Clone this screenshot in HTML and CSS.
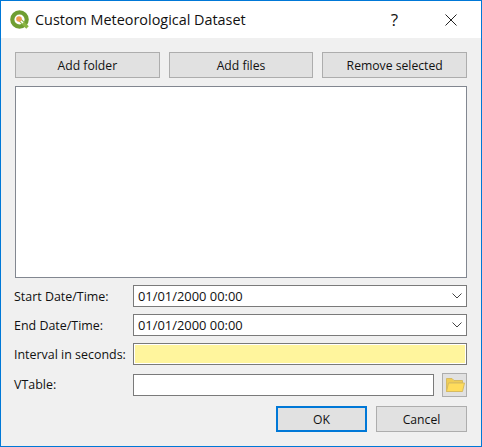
FILE: index.html
```html
<!DOCTYPE html>
<html lang="en">
<head>
  <meta charset="UTF-8" />
  <title>Custom Meteorological Dataset</title>
  <link rel="stylesheet" href="styles.css">
</head>
<body>

<div class="dialog">
  <div class="titlebar">
    <svg class="app-icon" width="20" height="20" viewBox="0 0 20 20">
      <circle cx="9.500" cy="9.500" r="7.200" fill="#fff" stroke="#6f9e32" stroke-width="4.200"/>
      <path d="M10 10 L17.500 17.500" stroke="#8ab543" stroke-width="3.600"/>
      <path d="M10 10 L13 13" stroke="#fff" stroke-width="1.500"/>
      <circle cx="9" cy="9" r="2.800" fill="#ee9a4d"/>
    </svg>
    <span class="title">Custom Meteorological Dataset</span>
    <span class="help">?</span>
    <svg class="close" width="12" height="12" viewBox="0 0 12 12">
      <path d="M0.500 0.500 L11.500 11.500 M11.500 0.500 L0.500 11.500" stroke="#222" stroke-width="1" fill="none"/>
    </svg>
  </div>

  <div class="content">
    <div class="top-buttons">
      <button class="btn">Add folder</button>
      <button class="btn">Add files</button>
      <button class="btn">Remove selected</button>
    </div>

    <div class="file-list"></div>

    <div class="form">
      <label>Start Date/Time:</label>
      <div class="field combo">
        <span>01/01/2000 00:00</span>
        <svg width="10" height="6" viewBox="0 0 10 6"><path d="M0.500 0.500 L5 5 L9.500 0.500" stroke="#444" fill="none"/></svg>
      </div>

      <label>End Date/Time:</label>
      <div class="field combo">
        <span>01/01/2000 00:00</span>
        <svg width="10" height="6" viewBox="0 0 10 6"><path d="M0.500 0.500 L5 5 L9.500 0.500" stroke="#444" fill="none"/></svg>
      </div>

      <label>Interval in seconds:</label>
      <div class="field interval"></div>

      <label>VTable:</label>
      <div class="vtable-row">
        <div class="field vtable"></div>
        <button class="btn folder-btn">
          <svg width="20" height="16" viewBox="0 0 20 16">
            <path d="M1.500 14.500 V1.500 H7 L9 3.500 H17.500 V6 H4 Z" fill="#f0cd55" stroke="#d6bb62"/>
            <path d="M1.500 14.500 L3.500 6 H19.500 L17.500 14.500 Z" fill="#ffdc5c" stroke="#d6bb62"/>
          </svg>
        </button>
      </div>
    </div>

    <div class="bottom-buttons">
      <button class="btn ok">OK</button>
      <button class="btn">Cancel</button>
    </div>
  </div>
</div>

</body>
</html>
```

FILE: styles.css
```css
* {
  box-sizing: border-box;
}

html, body {
  margin: 0;
  height: 100%;
}

body {
  font-family: 'Open Sans', 'Noto Sans', sans-serif;
  font-size: 12px;
  color: #111;
}

.dialog {
  width: 482px;
  height: 447px;
  display: flex;
  flex-direction: column;
  border: 1px solid #0078d7;
  background: #f0f0f0;
}

.titlebar {
  height: 37px;
  flex: none;
  display: flex;
  align-items: center;
  background: #fff;
  padding: 0 24px 0 9px;
}

.app-icon {
  margin-right: 5px;
}

.title {
  font-size: 14.400px;
  flex: 1;
}

.help {
  font-size: 17px;
  margin-right: 47px;
}

.content {
  flex: 1;
  display: flex;
  flex-direction: column;
  padding: 14px;
}

.top-buttons {
  display: flex;
  gap: 9px;
}

.btn {
  font-family: inherit;
  font-size: 12.200px;
  color: #111;
  height: 26px;
  background: #e1e1e1;
  border: 1px solid #adadad;
  padding: 0;
}

.top-buttons .btn {
  flex: 1;
}

.file-list {
  height: 192px;
  margin-top: 8px;
  background: #fff;
  border: 1px solid #828790;
}

.form {
  display: grid;
  grid-template-columns: 118px 1fr;
  align-items: center;
  row-gap: 7px;
  margin-top: 7px;
}

.form label {
  font-size: 12.450px;
  margin-left: -1px;
}

.field {
  height: 22px;
  background: #fff;
  border: 1px solid #7a7a7a;
}

.combo {
  display: flex;
  align-items: center;
  justify-content: space-between;
  padding: 0 4px;
  font-size: 12.900px;
}

.interval {
  background: #fff59d;
  box-shadow: inset 0 0 0 1px #fff;
}

.vtable-row {
  display: flex;
  align-items: center;
  gap: 8px;
  margin-top: 1px;
}

.vtable {
  flex: 1;
}

.folder-btn {
  width: 25px;
  height: 24px;
  display: flex;
  align-items: center;
  justify-content: center;
}

.bottom-buttons {
  display: flex;
  justify-content: flex-end;
  gap: 9px;
  margin-top: 9px;
}

.bottom-buttons .btn {
  width: 91px;
  height: 26px;
}

.ok {
  border: 2px solid #0078d7;
}
```
